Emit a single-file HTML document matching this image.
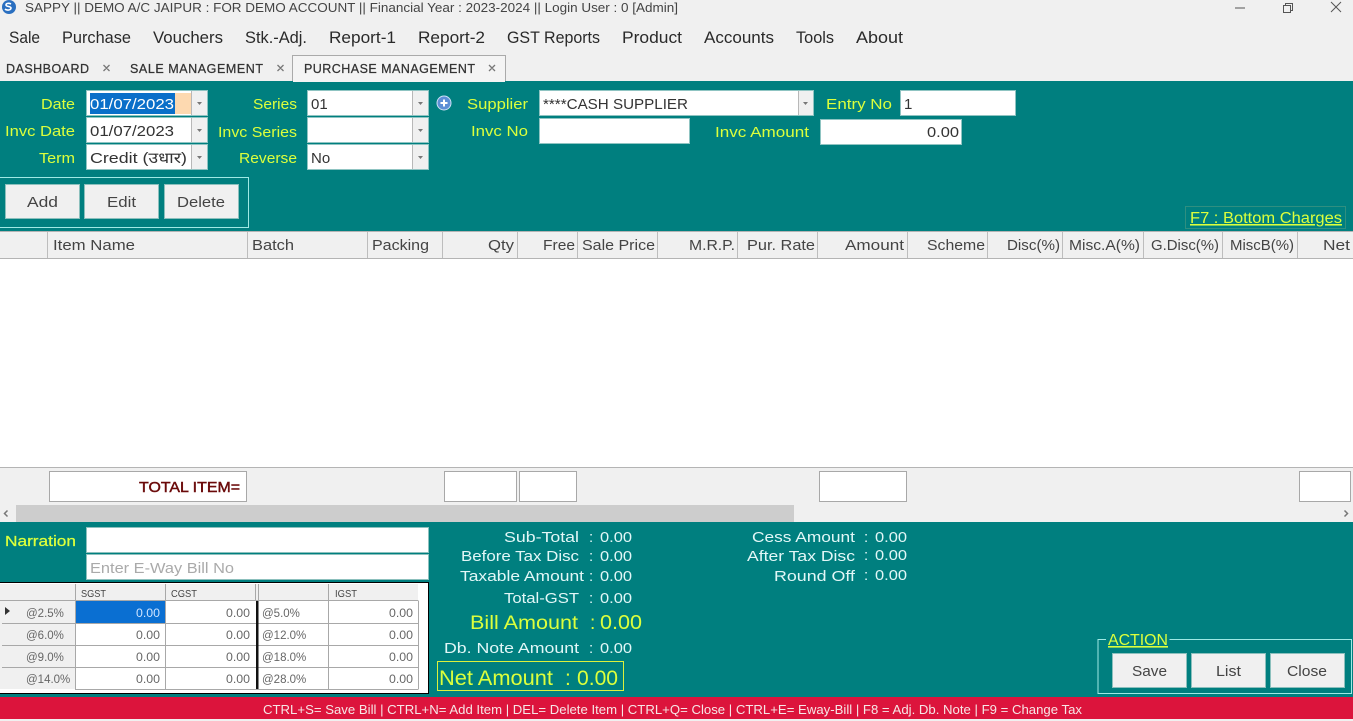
<!DOCTYPE html>
<html lang="en">
<head>
<meta charset="utf-8">
<title>SAPPY</title>
<style>
html,body{margin:0;padding:0;width:1353px;height:721px;overflow:hidden;background:#f0f0f0}
svg{display:block;position:absolute;left:0;top:0}
text{font-family:"Liberation Sans","Noto Sans CJK SC",sans-serif;white-space:pre}
.m{font-size:17px;fill:#2a2a2a}
.tb{font-size:12.5px;fill:#333;stroke:#333;stroke-width:.25}
.l{font-size:15px;fill:#dcff3c;text-anchor:end}
.v{font-size:15px;fill:#333}
.b{font-size:15px;fill:#444}
.h{font-size:15px;fill:#444}
.s{font-size:15px;fill:#e2f7f7}
.g{font-size:11.5px;fill:#666}
.gh{font-size:10.5px;fill:#444}
.y{fill:#dcff3c}
</style>
</head>
<body>
<svg width="1353" height="721" viewBox="0 0 1353 721" xmlns="http://www.w3.org/2000/svg">
<rect width="1353" height="721" fill="#f0f0f0"/>

<!-- title bar -->
<circle cx="9" cy="7" r="7" fill="#2a6fc0"/>
<path d="M5 9c2 2 6 1 6-1s-5-1-5-3 3-2 5-1" fill="none" stroke="#fff" stroke-width="1.6"/>
<text x="25" y="12" font-size="13" fill="#444" textLength="653" lengthAdjust="spacingAndGlyphs">SAPPY || DEMO A/C JAIPUR : FOR DEMO ACCOUNT || Financial Year : 2023-2024 || Login User : 0 [Admin]</text>
<path d="M1235 8h10" stroke="#555" fill="none"/>
<path d="M1283.500 5.500h7v7h-7zM1285.500 5.500v-2h7v7h-2" stroke="#555" fill="none"/>
<path d="M1331 2l10 10M1341 2l-10 10" stroke="#555" fill="none"/>

<!-- menu -->
<text class="m" x="9" y="43" textLength="31" lengthAdjust="spacingAndGlyphs">Sale</text>
<text class="m" x="62" y="43" textLength="69" lengthAdjust="spacingAndGlyphs">Purchase</text>
<text class="m" x="153" y="43" textLength="70" lengthAdjust="spacingAndGlyphs">Vouchers</text>
<text class="m" x="245" y="43" textLength="62" lengthAdjust="spacingAndGlyphs">Stk.-Adj.</text>
<text class="m" x="329" y="43" textLength="67" lengthAdjust="spacingAndGlyphs">Report-1</text>
<text class="m" x="418" y="43" textLength="67" lengthAdjust="spacingAndGlyphs">Report-2</text>
<text class="m" x="507" y="43" textLength="93" lengthAdjust="spacingAndGlyphs">GST Reports</text>
<text class="m" x="622" y="43" textLength="60" lengthAdjust="spacingAndGlyphs">Product</text>
<text class="m" x="704" y="43" textLength="70" lengthAdjust="spacingAndGlyphs">Accounts</text>
<text class="m" x="796" y="43" textLength="38" lengthAdjust="spacingAndGlyphs">Tools</text>
<text class="m" x="856" y="43" textLength="47" lengthAdjust="spacingAndGlyphs">About</text>

<!-- tabs -->
<text class="tb" x="6" y="73" textLength="83" lengthAdjust="spacing">DASHBOARD</text>
<text class="tb" x="130" y="73" textLength="133" lengthAdjust="spacing">SALE MANAGEMENT</text>
<rect x="292.500" y="55.500" width="213" height="26" fill="#f4f4f4" stroke="#aaa"/>
<text class="tb" x="304" y="73" textLength="171" lengthAdjust="spacing">PURCHASE MANAGEMENT</text>
<path d="M103.500 65l6 6M109.500 65l-6 6M277.500 65l6 6M283.500 65l-6 6M489 65l6 6M495 65l-6 6" stroke="#777" stroke-width="1.3" fill="none"/>

<!-- top teal panel -->
<rect x="0" y="81" width="1353" height="150" fill="#007f7f"/>
<rect x="293" y="80" width="212" height="2" fill="#f4f4f4"/>

<text class="l" x="75" y="109" textLength="34" lengthAdjust="spacingAndGlyphs">Date</text>
<text class="l" x="75" y="136" textLength="70" lengthAdjust="spacingAndGlyphs">Invc Date</text>
<text class="l" x="75" y="163" textLength="36" lengthAdjust="spacingAndGlyphs">Term</text>
<text class="l" x="297" y="109" textLength="44" lengthAdjust="spacingAndGlyphs">Series</text>
<text class="l" x="297" y="137" textLength="79" lengthAdjust="spacingAndGlyphs">Invc Series</text>
<text class="l" x="297" y="163" textLength="58" lengthAdjust="spacingAndGlyphs">Reverse</text>
<text class="l" x="528" y="109" textLength="61" lengthAdjust="spacingAndGlyphs">Supplier</text>
<text class="l" x="528" y="136" textLength="57" lengthAdjust="spacingAndGlyphs">Invc No</text>
<text class="l" x="892" y="109" textLength="66" lengthAdjust="spacingAndGlyphs">Entry No</text>
<text class="l" x="809" y="137" textLength="94" lengthAdjust="spacingAndGlyphs">Invc Amount</text>

<!-- fields -->
<g fill="#fff" stroke="#8fc4c2">
<rect x="86.500" y="90.500" width="121" height="25"/>
<rect x="86.500" y="117.500" width="121" height="25"/>
<rect x="86.500" y="144.500" width="121" height="25"/>
<rect x="307.500" y="90.500" width="121" height="25"/>
<rect x="307.500" y="117.500" width="121" height="25"/>
<rect x="307.500" y="144.500" width="121" height="25"/>
<rect x="539.500" y="90.500" width="274" height="25"/>
<rect x="900.500" y="90.500" width="115" height="25"/>
<rect x="539.500" y="118.500" width="150" height="25"/>
<rect x="820.500" y="119.500" width="141" height="25"/>
</g>
<g fill="#f0f0f0">
<rect x="191" y="91" width="16" height="24"/>
<rect x="191" y="118" width="16" height="24"/>
<rect x="191" y="145" width="16" height="24"/>
<rect x="412" y="91" width="16" height="24"/>
<rect x="412" y="118" width="16" height="24"/>
<rect x="412" y="145" width="16" height="24"/>
<rect x="798" y="91" width="15" height="24"/>
</g>
<path d="M191.500 91v24M191.500 118v24M191.500 145v24M412.500 91v24M412.500 118v24M412.500 145v24M798.500 91v24" stroke="#b8b8b8"/>
<g fill="#777">
<path d="M197 102h5l-2.500 3z"/><path d="M197 129h5l-2.500 3z"/><path d="M197 156h5l-2.500 3z"/>
<path d="M418 102h5l-2.500 3z"/><path d="M418 129h5l-2.500 3z"/><path d="M418 156h5l-2.500 3z"/>
<path d="M803 102h5l-2.500 3z"/>
</g>
<rect x="90" y="93" width="101" height="21" fill="#fdd9b0"/>
<rect x="90" y="93" width="85" height="21" fill="#0a6fc9"/>
<text x="90" y="109" font-size="15" fill="#fff" textLength="84" lengthAdjust="spacingAndGlyphs">01/07/2023</text>
<text class="v" x="90" y="136" textLength="84" lengthAdjust="spacingAndGlyphs">01/07/2023</text>
<text class="v" x="90" y="163" textLength="97" lengthAdjust="spacingAndGlyphs">Credit (उधार)</text>
<text class="v" x="311" y="109">01</text>
<text class="v" x="311" y="163">No</text>
<text class="v" x="543" y="109" textLength="145" lengthAdjust="spacingAndGlyphs">****CASH SUPPLIER</text>
<text class="v" x="904" y="109">1</text>
<text class="v" x="927" y="137" textLength="32" lengthAdjust="spacingAndGlyphs">0.00</text>

<!-- plus icon -->
<circle cx="444" cy="103" r="7" fill="#5d8fd6" stroke="#cfe2f5"/>
<path d="M444 99.500v7M440.500 103h7" stroke="#fff" stroke-width="2"/>

<!-- add/edit/delete -->
<rect x="-2" y="177.500" width="250.500" height="50" fill="none" stroke="#9fe9e4"/>
<g fill="#f0f0f0" stroke="#8cc0bd">
<rect x="5.500" y="184.500" width="74" height="34"/>
<rect x="84.500" y="184.500" width="74" height="34"/>
<rect x="164.500" y="184.500" width="74" height="34"/>
</g>
<text class="b" x="27" y="207" textLength="31" lengthAdjust="spacingAndGlyphs">Add</text>
<text class="b" x="107" y="207" textLength="29" lengthAdjust="spacingAndGlyphs">Edit</text>
<text class="b" x="177" y="207" textLength="48" lengthAdjust="spacingAndGlyphs">Delete</text>

<!-- F7 -->
<rect x="1185.500" y="206.500" width="160" height="22" fill="none" stroke="#2f8f80"/>
<text x="1190" y="223" font-size="15.500" class="y" text-decoration="underline" textLength="152" lengthAdjust="spacingAndGlyphs">F7 : Bottom Charges</text>

<!-- grid header -->
<rect x="0" y="231" width="1353" height="28" fill="#f0f0f0"/>
<path d="M0 231.500h1353M0 258.500h1353" stroke="#b4b4b4"/>
<path d="M47.500 232v26M247.500 232v26M367.500 232v26M442.500 232v26M517.500 232v26M577.500 232v26M657.500 232v26M737.500 232v26M817.500 232v26M907.500 232v26M987.500 232v26M1062.500 232v26M1143.500 232v26M1222.500 232v26M1297.500 232v26" stroke="#bdbdbd"/>
<text class="h" x="53" y="250" textLength="82" lengthAdjust="spacingAndGlyphs">Item Name</text>
<text class="h" x="252" y="250" textLength="42" lengthAdjust="spacingAndGlyphs">Batch</text>
<text class="h" x="372" y="250" textLength="57" lengthAdjust="spacingAndGlyphs">Packing</text>
<text class="h" x="488" y="250" textLength="26" lengthAdjust="spacingAndGlyphs">Qty</text>
<text class="h" x="543" y="250" textLength="32" lengthAdjust="spacingAndGlyphs">Free</text>
<text class="h" x="582" y="250" textLength="73" lengthAdjust="spacingAndGlyphs">Sale Price</text>
<text class="h" x="689" y="250" textLength="46" lengthAdjust="spacingAndGlyphs">M.R.P.</text>
<text class="h" x="747" y="250" textLength="68" lengthAdjust="spacingAndGlyphs">Pur. Rate</text>
<text class="h" x="845" y="250" textLength="59" lengthAdjust="spacingAndGlyphs">Amount</text>
<text class="h" x="927" y="250" textLength="58" lengthAdjust="spacingAndGlyphs">Scheme</text>
<text class="h" x="1007" y="250" textLength="53" lengthAdjust="spacingAndGlyphs">Disc(%)</text>
<text class="h" x="1069" y="250" textLength="71" lengthAdjust="spacingAndGlyphs">Misc.A(%)</text>
<text class="h" x="1151" y="250" textLength="68" lengthAdjust="spacingAndGlyphs">G.Disc(%)</text>
<text class="h" x="1230" y="250" textLength="64" lengthAdjust="spacingAndGlyphs">MiscB(%)</text>
<text class="h" x="1323" y="250" textLength="27" lengthAdjust="spacingAndGlyphs">Net</text>

<!-- grid body -->
<rect x="0" y="259" width="1353" height="208" fill="#fff"/>
<path d="M0 467.500h1353" stroke="#b4b4b4"/>

<!-- totals -->
<rect x="0" y="468" width="1353" height="37" fill="#f0f0f0"/>
<g fill="#fff" stroke="#a8a8a8">
<rect x="49.500" y="471.500" width="197" height="30"/>
<rect x="444.500" y="471.500" width="72" height="30"/>
<rect x="519.500" y="471.500" width="57" height="30"/>
<rect x="819.500" y="471.500" width="87" height="30"/>
<rect x="1299.500" y="471.500" width="51" height="30"/>
</g>
<text x="139" y="492" font-size="15" fill="#6b0a0a" stroke="#6b0a0a" stroke-width=".45" textLength="101" lengthAdjust="spacingAndGlyphs">TOTAL ITEM=</text>

<!-- scrollbar -->
<rect x="0" y="505" width="1353" height="17" fill="#f0f0f0"/>
<rect x="16" y="505" width="778" height="17" fill="#cdcdcd"/>
<path d="M7.500 510.500l-3 3 3 3M1344.500 510.500l3 3-3 3" stroke="#777" stroke-width="1.500" fill="none"/>

<!-- bottom teal -->
<rect x="0" y="522" width="1353" height="175" fill="#007f7f"/>
<text x="5" y="546" font-size="15" fill="#dcff3c" stroke="#dcff3c" stroke-width=".25" textLength="71" lengthAdjust="spacingAndGlyphs">Narration</text>
<g fill="#fff" stroke="#8cc0bd">
<rect x="86.500" y="527.500" width="342" height="25"/>
<rect x="86.500" y="554.500" width="342" height="25"/>
</g>
<text x="90" y="573" font-size="15" fill="#aaa" textLength="144" lengthAdjust="spacingAndGlyphs">Enter E-Way Bill No</text>

<!-- tax grid -->
<rect x="-2" y="582.500" width="430.500" height="111" fill="#fff" stroke="#000"/>
<rect x="0" y="584" width="418" height="17" fill="#f0f0f0"/>
<rect x="0" y="601" width="75" height="88" fill="#f0f0f0"/>
<rect x="76" y="601" width="89" height="22" fill="#0a6fd2"/>
<path d="M0 600.500h418.500M2 623.500h416.500M2 645.500h416.500M2 667.500h416.500M75 689.500h343.500" stroke="#a8a8a8"/>
<path d="M75.500 584v105M165.500 584v105M255.500 584v17M258.500 584v17M328.500 584v105M418.500 601v88" stroke="#a8a8a8"/>
<rect x="256" y="601" width="2.500" height="88" fill="#111"/>
<path d="M5 607l5 4-5 4z" fill="#333"/>
<text class="gh" x="81" y="597" textLength="25" lengthAdjust="spacingAndGlyphs">SGST</text>
<text class="gh" x="171" y="597" textLength="26" lengthAdjust="spacingAndGlyphs">CGST</text>
<text class="gh" x="335" y="597" textLength="22" lengthAdjust="spacingAndGlyphs">IGST</text>
<text class="g" x="26" y="617">@2.5%</text>
<text class="g" x="26" y="639">@6.0%</text>
<text class="g" x="26" y="661">@9.0%</text>
<text class="g" x="26" y="683">@14.0%</text>
<text class="g" x="136" y="617" textLength="24" lengthAdjust="spacingAndGlyphs" style="fill:#cfe4ff">0.00</text>
<text class="g" x="136" y="639" textLength="24" lengthAdjust="spacingAndGlyphs">0.00</text>
<text class="g" x="136" y="661" textLength="24" lengthAdjust="spacingAndGlyphs">0.00</text>
<text class="g" x="136" y="683" textLength="24" lengthAdjust="spacingAndGlyphs">0.00</text>
<text class="g" x="226" y="617" textLength="24" lengthAdjust="spacingAndGlyphs">0.00</text>
<text class="g" x="226" y="639" textLength="24" lengthAdjust="spacingAndGlyphs">0.00</text>
<text class="g" x="226" y="661" textLength="24" lengthAdjust="spacingAndGlyphs">0.00</text>
<text class="g" x="226" y="683" textLength="24" lengthAdjust="spacingAndGlyphs">0.00</text>
<text class="g" x="262" y="617">@5.0%</text>
<text class="g" x="262" y="639">@12.0%</text>
<text class="g" x="262" y="661">@18.0%</text>
<text class="g" x="262" y="683">@28.0%</text>
<text class="g" x="389" y="617" textLength="24" lengthAdjust="spacingAndGlyphs">0.00</text>
<text class="g" x="389" y="639" textLength="24" lengthAdjust="spacingAndGlyphs">0.00</text>
<text class="g" x="389" y="661" textLength="24" lengthAdjust="spacingAndGlyphs">0.00</text>
<text class="g" x="389" y="683" textLength="24" lengthAdjust="spacingAndGlyphs">0.00</text>

<!-- summary -->
<text class="s" x="504" y="542" textLength="75" lengthAdjust="spacingAndGlyphs">Sub-Total</text>
<text class="s" x="461" y="561" textLength="118" lengthAdjust="spacingAndGlyphs">Before Tax Disc</text>
<text class="s" x="460" y="581" textLength="124" lengthAdjust="spacingAndGlyphs">Taxable Amount</text>
<text class="s" x="504" y="603" textLength="75" lengthAdjust="spacingAndGlyphs">Total-GST</text>
<text class="s" x="444" y="653" textLength="135" lengthAdjust="spacingAndGlyphs">Db. Note Amount</text>
<text class="s" x="589" y="542">:</text>
<text class="s" x="589" y="561">:</text>
<text class="s" x="589" y="581">:</text>
<text class="s" x="589" y="603">:</text>
<text class="s" x="589" y="653">:</text>
<text class="s" x="600" y="542" textLength="32" lengthAdjust="spacingAndGlyphs">0.00</text>
<text class="s" x="600" y="561" textLength="32" lengthAdjust="spacingAndGlyphs">0.00</text>
<text class="s" x="600" y="581" textLength="32" lengthAdjust="spacingAndGlyphs">0.00</text>
<text class="s" x="600" y="603" textLength="32" lengthAdjust="spacingAndGlyphs">0.00</text>
<text class="s" x="600" y="653" textLength="32" lengthAdjust="spacingAndGlyphs">0.00</text>
<text x="470" y="629" font-size="19" class="y" textLength="108" lengthAdjust="spacingAndGlyphs">Bill Amount</text>
<text x="590" y="629" font-size="19" class="y">:</text>
<text x="600" y="629" font-size="20" class="y" textLength="42" lengthAdjust="spacingAndGlyphs">0.00</text>

<text class="s" x="752" y="542" textLength="103" lengthAdjust="spacingAndGlyphs">Cess Amount</text>
<text class="s" x="747" y="561" textLength="108" lengthAdjust="spacingAndGlyphs">After Tax Disc</text>
<text class="s" x="774" y="581" textLength="81" lengthAdjust="spacingAndGlyphs">Round Off</text>
<text class="s" x="864" y="542">:</text>
<text class="s" x="864" y="560">:</text>
<text class="s" x="864" y="580">:</text>
<text class="s" x="875" y="542" textLength="32" lengthAdjust="spacingAndGlyphs">0.00</text>
<text class="s" x="875" y="560" textLength="32" lengthAdjust="spacingAndGlyphs">0.00</text>
<text class="s" x="875" y="580" textLength="32" lengthAdjust="spacingAndGlyphs">0.00</text>

<rect x="437.500" y="661.500" width="186" height="29" fill="none" stroke="#dcf03c"/>
<text x="439" y="685" font-size="21" class="y" textLength="114" lengthAdjust="spacingAndGlyphs">Net Amount</text>
<text x="565" y="685" font-size="21" class="y">:</text>
<text x="577" y="685" font-size="21" class="y" textLength="41" lengthAdjust="spacingAndGlyphs">0.00</text>

<!-- action -->
<path d="M1106 639.500h-8v54h253.500v-54h-182" fill="none" stroke="#9fe9e4"/>
<text x="1108" y="645" font-size="16" class="y" text-decoration="underline" textLength="60" lengthAdjust="spacingAndGlyphs">ACTION</text>
<g fill="#f0f0f0" stroke="#8cc0bd">
<rect x="1112.500" y="653.500" width="74" height="34"/>
<rect x="1191.500" y="653.500" width="74" height="34"/>
<rect x="1270.500" y="653.500" width="74" height="34"/>
</g>
<text class="b" x="1132" y="676" textLength="35" lengthAdjust="spacingAndGlyphs">Save</text>
<text class="b" x="1216" y="676" textLength="25" lengthAdjust="spacingAndGlyphs">List</text>
<text class="b" x="1287" y="676" textLength="40" lengthAdjust="spacingAndGlyphs">Close</text>

<!-- status bar -->
<rect x="0" y="697" width="1353" height="22" fill="#dc143c"/>
<text x="263" y="714" font-size="13" fill="#f6e6e6" textLength="819" lengthAdjust="spacingAndGlyphs">CTRL+S= Save Bill | CTRL+N= Add Item | DEL= Delete Item | CTRL+Q= Close | CTRL+E= Eway-Bill | F8 = Adj. Db. Note | F9 = Change Tax</text>
</svg>
</body>
</html>
